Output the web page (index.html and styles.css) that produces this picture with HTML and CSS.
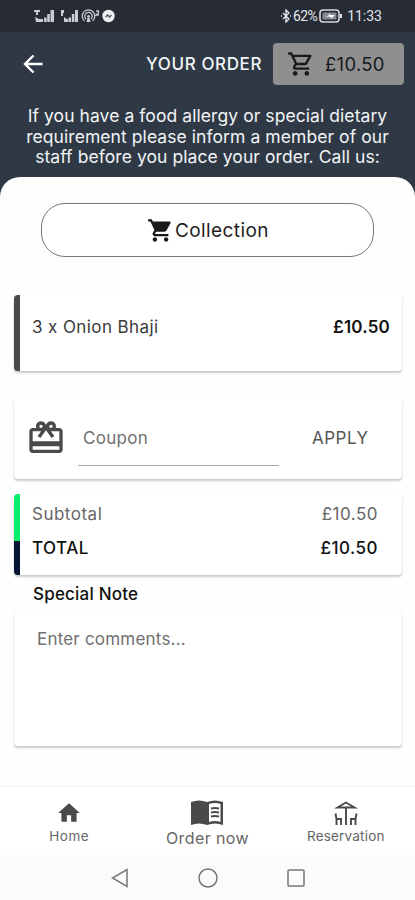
FILE: index.html
```html
<!DOCTYPE html>
<html lang="en">
<head>
<meta charset="utf-8">
<meta name="viewport" content="width=device-width">
<title>Your order</title>
<link rel="stylesheet" href="styles.css">
</head>
<body>
<div class="status">
  <svg class="status-left" width="84" height="16" viewBox="0 0 84 16">
    <g fill="#c9ccd2">
      <path d="M0 2h6v2H4v3H2V4H0zM1 9l4 2h4v3H2zM10 9.500h2.600V14H10zM13.200 6h2.600v8h-2.600zM16.500 2h3.500v12h-3.500z"/>
      <path d="M27 2h3v3h-1v3h-2zM30 9l3 2h1v3h-4zM34.500 9.500H37V14h-2.500zM37.800 6h2.600v8h-2.600zM41 2h3v12h-3z"/>
      <circle cx="74.500" cy="8" r="6.200" fill="#eef0f2"/><circle cx="54.500" cy="8.500" r="1.400"/>
      <path d="M53.500 10h2l1 4h-4z"/>
    </g>
    <g fill="none" stroke="#c9ccd2" stroke-width="1.300">
      <path d="M50.500 13a6.300 6.300 0 1 1 8 0M52 10.900a3.700 3.700 0 1 1 5 0M62 3h2.500v2L62 7h3"/>
      <path d="m71.500 9 2-2 2 2 2-2" stroke="#50555e"/>
    </g>
  </svg>
  <div class="status-right">
    <svg width="10" height="14" viewBox="0 0 10 14" fill="none" stroke="#e4e6ea" stroke-width="1.300"><path d="m2 4 6 6-3 3V1l3 3-6 6M0 7h1M9 7h1"/></svg>
    <span class="percent">62%</span>
    <svg width="24" height="14" viewBox="0 0 24 14"><rect x="1" y="1" width="19" height="12" rx="3" fill="none" stroke="#d5d7db" stroke-width="1.600"/><rect x="3.500" y="3.500" width="14" height="7" rx="1" fill="#858990"/><path d="M5 7h4l2-3v2h5l-4 4V8z" fill="#fff"/><path d="M22 5v4" stroke="#d5d7db" stroke-width="2"/></svg>
    <span class="clock">11:33</span>
  </div>
</div>
<header class="hero">
  <div class="topbar">
    <svg class="back" width="20" height="20" viewBox="0 0 20 20" fill="none" stroke="#fff" stroke-width="2.400"><path d="M19.500 10H2M10.500 1.500 2 10l8.500 8.500"/></svg>
    <h1 class="title">YOUR ORDER</h1>
    <button class="basket">
      <svg width="28" height="28" viewBox="0 0 24 24" fill="#17191c"><path d="M15.550 13c.75 0 1.410-.41 1.750-1.030l3.580-6.490A.996.996 0 0 0 20.010 4H5.210l-.94-2H1v2h2l3.600 7.590-1.350 2.440C4.520 15.370 5.480 17 7 17h12v-2H7l1.100-2h7.450zM6.160 6h12.150l-2.760 5H8.530L6.160 6zM7 18c-1.100 0-1.990.9-1.990 2S5.900 22 7 22s2-.9 2-2-.9-2-2-2zm10 0c-1.100 0-1.990.9-1.990 2s.89 2 1.990 2 2-.9 2-2-.9-2-2-2z"/></svg>
      <span>£10.50</span>
    </button>
  </div>
  <p class="notice">If you have a food allergy or special dietary<br>requirement please inform a member of our<br>staff before you place your order. Call us:</p>
</header>
<main class="sheet">
  <button class="collection">
    <svg width="27" height="27" viewBox="0 0 24 24" fill="#191919"><path d="M7 18c-1.100 0-1.990.9-1.990 2S5.900 22 7 22s2-.9 2-2-.9-2-2-2zM1 2v2h2l3.600 7.590-1.350 2.450c-.16.28-.25.61-.25.96 0 1.100.9 2 2 2h12v-2H7.420c-.14 0-.25-.11-.25-.25l.03-.12.900-1.630h7.450c.75 0 1.410-.41 1.750-1.030l3.580-6.490A1 1 0 0 0 20 4H5.210l-.94-2H1zm16 16c-1.100 0-1.990.9-1.990 2s.89 2 1.990 2 2-.9 2-2-.9-2-2-2z"/></svg>
    <span>Collection</span>
  </button>
  <section class="card item"><span class="item-name">3 x Onion Bhaji</span><span class="item-price">£10.50</span></section>
  <section class="card coupon">
    <svg class="gift" width="40" height="40" viewBox="0 0 24 24" fill="#4a4a4a"><path d="M20 6h-2.180c.11-.31.18-.65.18-1 0-1.660-1.340-3-3-3-1.050 0-1.960.54-2.500 1.350l-.5.67-.5-.68C10.960 2.540 10.050 2 9 2 7.340 2 6 3.340 6 5c0 .35.070.69.180 1H4c-1.110 0-1.990.89-1.990 2L2 19c0 1.110.89 2 2 2h16c1.110 0 2-.89 2-2V8c0-1.110-.89-2-2-2zm-5-2c.55 0 1 .45 1 1s-.45 1-1 1-1-.45-1-1 .45-1 1-1zM9 4c.55 0 1 .45 1 1s-.45 1-1 1-1-.45-1-1 .45-1 1-1zm11 15H4v-2h16v2zm0-5H4V8h5.080L7 10.830 8.620 12 11 8.760l1-1.360 1 1.360L15.380 12 17 10.830 14.920 8H20v6z"/></svg>
    <div class="coupon-field">Coupon</div>
    <div class="apply">APPLY</div>
  </section>
  <section class="card totals">
    <div class="row"><span class="sub">Subtotal</span><span class="amount">£10.50</span></div>
    <div class="row strong"><span class="total">TOTAL</span><span class="amount">£10.50</span></div>
  </section>
  <h2 class="note-title">Special Note</h2>
  <section class="card comments"><span>Enter comments...</span></section>
</main>
<nav class="tabs">
  <div class="tab"><svg width="28" height="28" viewBox="0 0 24 24" fill="#4a4a4a"><path d="M10 20v-6h4v6h5v-8h3L12 3 2 12h3v8z"/></svg><span class="home">Home</span></div>
  <div class="tab active"><svg width="34" height="26" viewBox="0 0 34 26"><path d="M1 2q8-3 16 0 8-3 16 0v23q-8-3-16 0-8-3-16 0z" fill="#4a4a4a"/><path d="M19 4q6-2 11.500 0v18Q25 20 19 22z" fill="#fff"/><path d="M21 8.500q4-1 8 0M21 12.500q4-1 8 0M21 16.500q4-1 8 0" fill="none" stroke="#4a4a4a" stroke-width="1.900"/></svg><span class="order">Order now</span></div>
  <div class="tab"><svg width="24" height="26" viewBox="0 0 24 26" fill="none" stroke="#4a4a4a" stroke-width="1.900"><path d="M12 7v18M1.500 13.500l1 5.500H7v6M2.500 18v7M22.500 13.500l-1 5.500H17v6M21.500 18v7"/><path d="M12 2.500 3.500 7.500h17z"/></svg><span class="reservation">Reservation</span></div>
</nav>
<div class="system">
  <svg width="18" height="20" viewBox="0 0 18 20"><path d="M16 1.500v17L1.500 10z"/></svg>
  <svg width="20" height="20" viewBox="0 0 20 20"><circle cx="10" cy="10" r="9"/></svg>
  <svg width="18" height="18" viewBox="0 0 18 18"><rect x="1" y="1" width="16" height="16" rx="1"/></svg>
</div>
</body>
</html>
```
FILE: styles.css
```css
* { box-sizing: border-box; }
body { margin: 0; width: 415px; height: 900px; overflow: hidden; display: flex; flex-direction: column; background: #2f3945; font-family: Inter, "Open Sans", sans-serif; color: #111; }
svg { display: block; flex: none; }
button { font: inherit; padding: 0; border: 0; }
span { white-space: nowrap; }
.status { height: 32px; flex: none; background: #262b36; display: flex; justify-content: space-between; align-items: center; padding: 0 33px 0 34px; color: #e4e6ea; }
.status-right { display: flex; align-items: center; gap: 2px; font: 14px Roboto, sans-serif; }
.percent { letter-spacing: -0.6px; }
.clock { margin-left: 2px; }
.hero { height: 145px; flex: none; color: #f2f4f6; }
.topbar { height: 64px; display: flex; align-items: center; padding: 0 11px 0 23px; }
.title { margin: 0 11px 0 auto; font-size: 17px; line-height: 20px; font-weight: 500; white-space: nowrap; letter-spacing: 0.6px; }
.basket { width: 131px; height: 42px; background: #8f8f90; border-radius: 4px; display: flex; align-items: center; padding-left: 14px; gap: 10px; font-size: 18.5px; letter-spacing: 0.3px; color: #17191c; }
.notice { margin: 10px 0 0; font-size: 17.5px; line-height: 20.5px; letter-spacing: 0.07px; text-align: center; }
.sheet { flex: 1; background: #fefefe; border-radius: 20px 20px 0 0; padding: 26px 13px 0 14px; }
.collection { width: 333px; height: 54px; margin: 0 0 38px 27px; display: flex; align-items: center; padding-left: 105px; gap: 1px; background: #fff; border: 1px solid #777; border-radius: 24px; font-size: 19px; letter-spacing: 0.4px; color: #222; }
.card { background: #fff; border-radius: 4px; box-shadow: 0 2px 2px rgba(0,0,0,.2), 0 0 1px rgba(0,0,0,.12); overflow: hidden; }
.item { height: 76px; border-left: 6px solid #4a4a4a; display: flex; justify-content: space-between; padding: 22px 12px 0 12px; font-size: 17px; line-height: 20px; letter-spacing: 0.4px; color: #3b3b3b; }
.item-price { color: #111; font-weight: 600; letter-spacing: 0.2px; }
.coupon { height: 80px; margin-top: 28px; display: flex; align-items: center; padding-left: 12px; font-size: 17px; letter-spacing: 0.3px; color: #707070; }
.gift { margin-top: -2px; }
.coupon-field { width: 201px; height: 39px; margin: 15px 0 0 12px; padding: 1px 0 0 5px; line-height: 20px; border-bottom: 1px solid #aaa; }
.apply { margin: -2px 0 0 33px; letter-spacing: 0.5px; color: #555; }
.totals { height: 81px; margin-top: 15px; padding: 10px 24px 0 18px; background: linear-gradient(#09ef6d 0 47px, #071333 47px) 0 0 / 6px 100% no-repeat #fff; font-size: 17px; line-height: 20px; letter-spacing: 0.5px; color: #666; }
.row { display: flex; justify-content: space-between; height: 34px; }
.strong { color: #111; font-weight: 500; }
.note-title { margin: 9px 0 6px 19px; font-size: 17px; line-height: 20px; font-weight: 500; letter-spacing: 0.2px; }
.comments { height: 136px; padding: 19px 23px; font-size: 17px; line-height: 20px; letter-spacing: 0.2px; color: #707070; }
.tabs { height: 69px; flex: none; background: #fff; border-top: 1px solid #f2f2f2; display: grid; grid-template-columns: repeat(3, 1fr); color: #666; }
.tab { display: flex; flex-direction: column; align-items: center; padding-top: 13px; font-size: 13.5px; line-height: 16px; letter-spacing: 0.2px; }
.tab svg { height: 26px; margin-bottom: 2px; }
.home { letter-spacing: 0.5px; }
.active { font-size: 16px; line-height: 18px; letter-spacing: 0.4px; }
.active svg { margin-bottom: 3px; }
.system { height: 45px; flex: none; background: #fbfbfb; display: flex; justify-content: center; align-items: center; gap: 69px; }
.system svg { fill: none; stroke: #777; stroke-width: 1.5; }
```
